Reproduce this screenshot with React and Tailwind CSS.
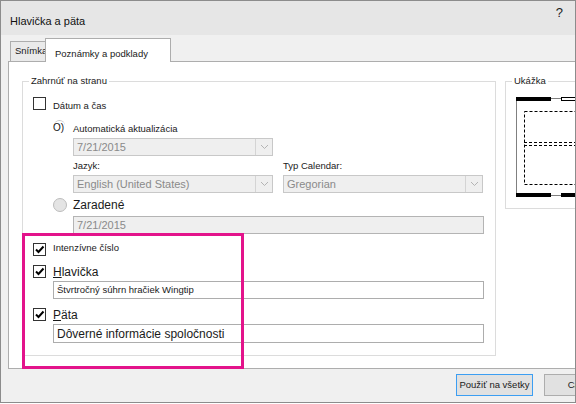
import React from 'react';

const Check = () => (
  <svg width="11" height="11" viewBox="0 0 11 11">
    <path d="M2 5.5 L4.5 8 L9.5 2.5" fill="none" stroke="#000" strokeWidth="2" />
  </svg>
);

const CheckBox = ({ checked }) => (
  <div className="w-[13px] h-[13px] border border-[#333333] bg-white flex items-center justify-center shrink-0">
    {checked && <Check />}
  </div>
);

const Chevron = () => (
  <svg width="9" height="6" viewBox="0 0 9 6">
    <path d="M1 1 L4.5 4.5 L8 1" fill="none" stroke="#b4b4b4" strokeWidth="1" />
  </svg>
);

const DisabledSelect = ({ value }) => (
  <div className="w-[200px] h-[18px] border border-[#c8c8c8] bg-[#efefef] flex items-center shrink-0">
    <span className="flex-1 pl-[3px] text-[11px] text-[#8a8a8a] leading-none">{value}</span>
    <div className="w-[17px] h-full border-l border-[#d4d4d4] flex items-center justify-center">
      <Chevron />
    </div>
  </div>
);

const Preview = () => (
  <svg width="80" height="104" viewBox="0 0 80 104">
    <line x1="0.5" y1="2" x2="0.5" y2="100" stroke="#808080" />
    <line x1="0" y1="2.5" x2="80" y2="2.5" stroke="#808080" />
    <line x1="0" y1="99.5" x2="80" y2="99.5" stroke="#808080" />
    <rect x="0" y="1" width="35" height="4" fill="#000" />
    <rect x="45.5" y="1.5" width="40" height="3" fill="#fff" stroke="#000" />
    <rect x="0" y="97" width="35" height="4" fill="#000" />
    <rect x="45" y="97" width="40" height="4" fill="#000" />
    <rect x="8.5" y="15.5" width="90" height="73" fill="none" stroke="#000" strokeDasharray="3 2" />
    <line x1="8" y1="46.5" x2="80" y2="46.5" stroke="#000" strokeDasharray="3 2" />
    <line x1="8" y1="49.5" x2="80" y2="49.5" stroke="#000" strokeDasharray="3 2" />
  </svg>
);

export default function App() {
  return (
    <div className="w-[576px] h-[404px] bg-white overflow-hidden relative font-['Liberation_Sans',Arial,sans-serif] text-[#1a1a1a]">
      <div className="w-[576px] h-[403px] border border-[#8c8c8c] bg-[#f0f0f0] flex flex-col overflow-hidden">
        {/* title */}
        <div className="h-[34px] bg-[#e6e6e6] flex items-start justify-between shrink-0">
          <span className="mt-[13px] ml-[9px] text-[11px] leading-[14px] text-[#111]">Hlavička a päta</span>
          <span className="mt-[5px] mr-[12px] text-[13px] leading-[14px] text-[#222]">?</span>
        </div>

        {/* tabs */}
        <div className="h-[26px] flex items-end pl-[9px] shrink-0">
          <div className="w-[36px] h-[20px] border border-b-0 border-[#adadad] bg-[#eaeaea] pl-[4px] flex items-center text-[9.5px]">
            Snímka
          </div>
          <div className="relative z-10 -ml-px -mb-px w-[126px] h-[24px] border border-b-0 border-[#adadad] bg-white pl-[9px] pt-[9px] text-[9.5px] leading-[12px]">
            Poznámky a podklady
          </div>
        </div>

        {/* panel */}
        <div className="ml-[7px] w-[580px] h-[308px] border border-[#adadad] bg-white flex items-start gap-[9px] pl-[13px] pt-[19px] shrink-0">
          {/* left fieldset */}
          <div className="w-[474px] h-[275px] border border-[#dcdcdc] shrink-0 flex flex-col">
            <div className="-mt-[8px] ml-[6px] w-fit bg-white px-[2px] text-[9.5px] leading-[14px]">Zahrnúť na stranu</div>

            <div className="mt-[9px] ml-[10px] h-[13px] flex items-center">
              <CheckBox />
              <span className="ml-[7px] mt-[4px] text-[9.5px] leading-none">Dátum a čas</span>
            </div>

            <div className="mt-[10px] ml-[30px] h-[13px] flex items-center">
              <div className="relative w-[13px] h-[13px]">
                <div className="absolute left-[1px] top-0 w-[11px] h-[11px] rounded-full border-t border-[#c8c8c8]" />
                <span className="absolute left-0 top-[2px] text-[10px] leading-[11px] text-[#111]">O)</span>
              </div>
              <span className="ml-[7px] mt-[4px] text-[9.5px] leading-none">Automatická aktualizácia</span>
            </div>

            <div className="mt-[5px] ml-[50px]">
              <DisabledSelect value="7/21/2015" />
            </div>

            <div className="mt-[2px] ml-[50px] h-[17px] flex items-center gap-[10px] text-[9.5px]">
              <span className="w-[200px]">Jazyk:</span>
              <span>Typ Calendar:</span>
            </div>

            <div className="ml-[50px] flex gap-[10px]">
              <DisabledSelect value="English (United States)" />
              <DisabledSelect value="Gregorian" />
            </div>

            <div className="mt-[5px] ml-[30px] h-[14px] flex items-center">
              <div className="w-[14px] h-[14px] rounded-full border border-[#bcbcbc] bg-[#e4e4e4] shrink-0" />
              <span className="ml-[6px] text-[12px] leading-none">Zaradené</span>
            </div>

            <div className="mt-[4px] ml-[50px] w-[411px] h-[18px] border border-[#b4b4b4] bg-[#efefef] flex items-center pl-[3px] text-[11px] text-[#8a8a8a]">
              7/21/2015
            </div>

            <div className="mt-[9px] ml-[10px] h-[13px] flex items-center">
              <CheckBox checked />
              <span className="ml-[7px] -mt-[3px] text-[9.5px] leading-none">Intenzívne číslo</span>
            </div>

            <div className="mt-[9px] ml-[10px] h-[13px] flex items-center">
              <CheckBox checked />
              <span className="ml-[7px] text-[12px] leading-none"><span className="underline">H</span>lavička</span>
            </div>

            <div className="mt-[3px] ml-[30px] w-[431px] h-[18px] border border-[#adadad] bg-white flex items-center pl-[3px] text-[9.5px]">
              Štvrtročný súhrn hračiek Wingtip
            </div>

            <div className="mt-[9px] ml-[10px] h-[13px] flex items-center">
              <CheckBox checked />
              <span className="ml-[7px] text-[12px] leading-none"><span className="underline">P</span>äta</span>
            </div>

            <div className="mt-[3px] ml-[30px] w-[431px] h-[19px] border border-[#adadad] bg-white flex items-center pl-[3px] text-[12px]">
              Dôverné informácie spoločnosti
            </div>
          </div>

          {/* preview fieldset */}
          <div className="w-[120px] h-[128px] border border-[#dcdcdc] shrink-0 flex flex-col">
            <div className="-mt-[8px] ml-[6px] w-fit bg-white px-[2px] text-[9.5px] leading-[14px]">Ukážka</div>
            <div className="mt-[8px] ml-[10px]">
              <Preview />
            </div>
          </div>
        </div>

        {/* buttons */}
        <div className="flex-1 flex items-start gap-[11px] pl-[455px] pt-[5px]">
          <div className="w-[77px] h-[22px] border border-[#3c9ef2] bg-[#e1e1e1] flex items-center justify-center text-[9.5px] shrink-0">
            Použiť na všetky
          </div>
          <div className="w-[77px] h-[22px] border border-[#adadad] bg-[#e1e1e1] flex items-center justify-center text-[9.5px] shrink-0">
            Cancel
          </div>
        </div>
      </div>

      {/* highlight overlay */}
      <div className="absolute left-[22px] top-[233px] w-[222px] h-[136px] border-[3px] border-[#e3138b]" />
    </div>
  );
}
